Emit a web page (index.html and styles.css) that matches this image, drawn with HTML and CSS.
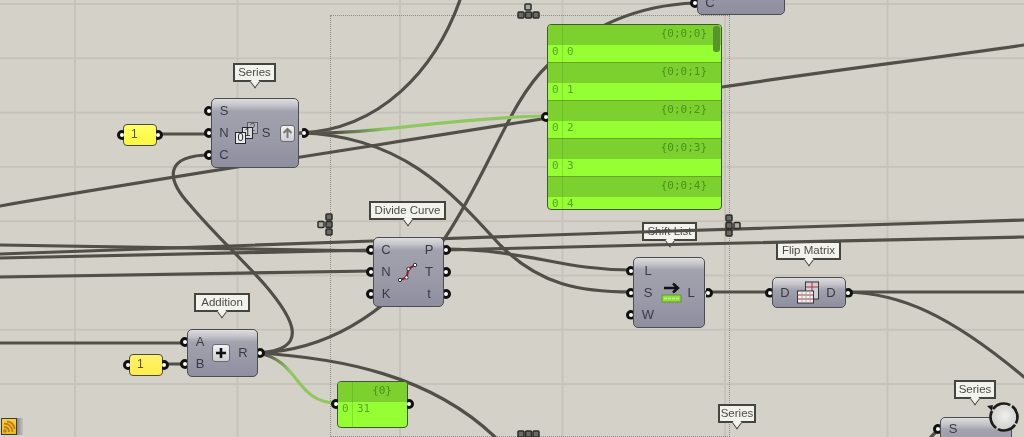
FILE: index.html
```html
<!DOCTYPE html>
<html lang="en">
<head>
    <meta charset="UTF-8">
    <title>Grasshopper canvas</title>
    <link rel="stylesheet" href="styles.css">
</head>
<body>
    <div class="canvas">
        <div class="group"></div>

        <!-- tooltips sit under the wires -->
        <div class="tip tip-series">Series</div>
        <div class="tip tip-divide">Divide Curve</div>
        <div class="tip tip-shift">Shift List</div>
        <div class="tip tip-flip">Flip Matrix</div>
        <div class="tip tip-add">Addition</div>
        <div class="tip tip-series2">Series</div>
        <div class="tip tip-series3">Series</div>

        <svg class="wires" width="1024" height="437" viewBox="0 0 1024 437">
            <defs>
                <linearGradient id="green1" gradientUnits="userSpaceOnUse" x1="300" y1="0" x2="546" y2="0">
                    <stop offset="0.15" stop-color="#56554c"/>
                    <stop offset="0.35" stop-color="#8fc760"/>
                </linearGradient>
                <linearGradient id="green2" gradientUnits="userSpaceOnUse" x1="258" y1="0" x2="337" y2="0">
                    <stop offset="0.1" stop-color="#56554c"/>
                    <stop offset="0.4" stop-color="#8fc760"/>
                </linearGradient>
            </defs>
            <!-- long runs -->
            <path d="M0 206 C180 175 360 148 548 118"/>
            <path d="M722 87 C820 72 920 60 1024 45"/>
            <path d="M0 245 C130 248 260 250 373 251"/>
            <path d="M0 254 C130 250 260 246 373 241 L640 232 L1024 220"/>
            <path d="M0 258 C130 255 260 252 373 250 L445 250 L650 245 L1024 237"/>
            <path d="M0 277 C130 274 260 272 373 271"/>
            <path d="M0 343 L187 343"/>
            <!-- series -->
            <path d="M156 134 L211 134"/>
            <path d="M300 133 C380 130 435 70 460 0"/>
            <path d="M300 133 C400 135 450 190 500 245 C540 285 580 292 632 292"/>
            <path d="M211 155 C165 155 165 178 190 205 C215 235 245 262 265 285 C295 320 310 350 258 353"/>
            <!-- addition out -->
            <path d="M258 353 C340 350 400 300 445 238 C490 170 510 100 548 65 C590 25 640 5 695 3"/>
            <path d="M258 353 C340 358 430 375 495 437"/>
            <path d="M162 364 L187 364"/>
            <!-- divide, shift, flip -->
            <path d="M445 249 C530 250 560 270 632 270"/>
            <path d="M705 292 L772 292"/>
            <path d="M846 292 L1024 292"/>
            <path d="M846 292 C900 293 950 315 1024 377"/>
            <path d="M931 437 L938 430"/>
            <path class="hot" stroke="url(#green1)" d="M300 133 C380 135 440 118 546 116"/>
            <path class="hot" stroke="url(#green2)" d="M258 353 C300 360 295 403 337 403"/>
        </svg>

        <!-- widgets of the group -->
        <svg class="gadget gd-top" width="24" height="16" viewBox="0 0 24 16"><rect x="8" y="1" width="6" height="6" class="pale"/><rect x="1" y="9" width="6" height="6"/><rect x="8.500" y="9" width="6" height="6"/><rect x="16" y="9" width="6" height="6"/></svg>
        <svg class="gadget gd-left" width="17" height="24" viewBox="0 0 17 24"><rect x="9" y="1" width="6" height="6"/><rect x="1" y="8.500" width="6" height="6" class="pale"/><rect x="9" y="8.500" width="6" height="6"/><rect x="9" y="16" width="6" height="6"/></svg>
        <svg class="gadget gd-right" width="17" height="24" viewBox="0 0 17 24"><rect x="1" y="1" width="6" height="6"/><rect x="1" y="8.500" width="6" height="6"/><rect x="9" y="8.500" width="6" height="6" class="pale"/><rect x="1" y="16" width="6" height="6"/></svg>
        <svg class="gadget gd-bottom" width="24" height="8" viewBox="0 0 24 8"><rect x="1" y="1" width="6" height="6"/><rect x="8.500" y="1" width="6" height="6"/><rect x="16" y="1" width="6" height="6"/></svg>

        <!-- sliders -->
        <div class="slider sl-1"><span class="port port-l"></span>1<span class="port port-r"></span></div>
        <div class="slider sl-2"><span class="port port-l"></span>1<span class="port port-r"></span></div>

        <!-- series -->
        <div class="node n-series">
            <div class="ins"><span class="pin">S</span><span class="pin">N</span><span class="pin">C</span></div>
            <div class="chips">
                <span class="chip chip-2">2</span>
                <span class="chip chip-1">1</span>
                <span class="chip chip-0">0</span>
            </div>
            <div class="outs outs-btn">
                <span class="pin pin-out">S</span>
                <span class="btn btn-up">
                    <svg width="11" height="12" viewBox="0 0 11 12"><path d="M5.500 11 V3 M1.500 6 L5.500 2 L9.500 6" fill="none" stroke="#777" stroke-width="2"/></svg>
                </span>
            </div>
        </div>

        <!-- top node, cut by the window -->
        <div class="node n-top">
            <div class="ins ins-end"><span class="pin">C</span></div>
        </div>

        <!-- divide curve -->
        <div class="node n-divide">
            <div class="ins"><span class="pin">C</span><span class="pin">N</span><span class="pin">K</span></div>
            <svg class="glyph" width="22" height="22" viewBox="0 0 22 22">
                <path d="M3 19 L9.500 16.500 L11.500 8 L18 4" fill="none" stroke="#8c1c24" stroke-width="2"/>
                <g fill="#fff" stroke="#333"><circle cx="3" cy="19" r="1.700"/><circle cx="9.500" cy="16.500" r="1.700"/><circle cx="11.500" cy="8" r="1.700"/><circle cx="18" cy="4" r="1.700"/></g>
            </svg>
            <div class="outs"><span class="pin pin-out">P</span><span class="pin pin-out">T</span><span class="pin pin-out">t</span></div>
        </div>

        <!-- shift list -->
        <div class="node n-shift">
            <div class="ins"><span class="pin">L</span><span class="pin">S</span><span class="pin">W</span></div>
            <svg class="glyph" width="22" height="22" viewBox="0 0 22 22">
                <path d="M3 6 H17 M12 1.500 L17 6 L12 10.500" fill="none" stroke="#111" stroke-width="2.400"/>
                <rect x="1" y="13" width="19" height="7" fill="#8ee03c" stroke="#5e9a2a"/>
                <path d="M3 16.500 H18" stroke="#c4ee8c" stroke-width="1.500" stroke-dasharray="3 1"/>
            </svg>
            <div class="outs"><span class="pin pin-out">L</span></div>
        </div>

        <!-- flip matrix -->
        <div class="node n-flip">
            <div class="ins"><span class="pin">D</span></div>
            <svg class="glyph" width="24" height="24" viewBox="0 0 24 24">
                <rect x="9.500" y="1" width="13" height="17" fill="#cfcfd4" stroke="#333"/>
                <path d="M16 1 V18 M9.500 6 H22.500" stroke="#b03038"/>
                <rect x="1.500" y="10" width="16" height="12" fill="#f2f2f2" stroke="#333"/>
                <path d="M1.500 14 H17.500 M1.500 18 H17.500" stroke="#b03038"/>
                <path d="M6 10 V22 M10 10 V22 M14 10 V22" stroke="#aaa"/>
            </svg>
            <div class="outs"><span class="pin pin-out">D</span></div>
        </div>

        <!-- addition -->
        <div class="node n-add">
            <div class="ins"><span class="pin">A</span><span class="pin">B</span></div>
            <span class="btn btn-plus">
                <svg width="12" height="12" viewBox="0 0 12 12"><path d="M6 1 V11 M1 6 H11" stroke="#111" stroke-width="2.600"/></svg>
            </span>
            <div class="outs"><span class="pin pin-out">R</span></div>
        </div>

        <!-- lower right series -->
        <div class="node n-series3">
            <div class="ins ins-start"><span class="pin">S</span></div>
        </div>
        <svg class="knob" width="34" height="34" viewBox="0 0 34 34">
            <defs>
                <radialGradient id="knobfill" cx="50%" cy="45%" r="55%">
                    <stop offset="0" stop-color="#f0f0ee"/>
                    <stop offset="1" stop-color="#cdcdca"/>
                </radialGradient>
            </defs>
            <circle cx="18" cy="17" r="13.500" fill="url(#knobfill)" stroke="#1c1c1a" stroke-width="2.600" stroke-dasharray="19 2.200" transform="rotate(35 18 17)"/>
            <path d="M1 6 L7 5 L6 11 Z" fill="#1c1c1a"/>
        </svg>

        <!-- big panel -->
        <div class="panel panel-big">
            <span class="port port-panel"></span>
            <div class="rows">
                <div class="head">{0;0;0}</div><div class="line"><b>0</b>0</div>
                <div class="head">{0;0;1}</div><div class="line"><b>0</b>1</div>
                <div class="head">{0;0;2}</div><div class="line"><b>0</b>2</div>
                <div class="head">{0;0;3}</div><div class="line"><b>0</b>3</div>
                <div class="head">{0;0;4}</div><div class="line"><b>0</b>4</div>
            </div>
            <span class="scroll"></span>
        </div>

        <!-- small panel -->
        <div class="panel panel-small">
            <span class="port port-panel"></span>
            <span class="port port-panel2"></span>
            <div class="rows">
                <div class="head">{0}</div><div class="line line-last"><b>0</b>31</div>
            </div>
        </div>

        <!-- status icon -->
        <div class="status">
            <span class="status-icon">
                <svg width="14" height="14" viewBox="0 0 14 14"><g fill="none" stroke="#c27c18" stroke-width="1.800"><path d="M2 7 C5 7 7 9 7 12"/><path d="M2 3.500 C7 3.500 10.500 7 10.500 12"/><path d="M5 1.500 C9 1.500 12.500 5 12.500 9"/></g><circle cx="3" cy="11" r="1.800" fill="#c27c18"/></svg>
            </span>
            <span class="status-bar"></span>
        </div>
    </div>
</body>
</html>
```

FILE: styles.css
```css
html, body {
    height: 100%;
    margin: 0;
    padding: 0;
}
body {
    overflow: hidden;
    font-family: "Liberation Sans", Arial, sans-serif;
}

/* canvas and grid */
.canvas {
    position: relative;
    width: 1024px;
    height: 437px;
    overflow: hidden;
    background-color: #d4d1c9;
    background-image:
        linear-gradient(90deg, #c6c4ba 2px, transparent 2px),
        linear-gradient(#c6c4ba 2px, transparent 2px);
    background-size: 162.500px 100%, 100% 54.300px;
    background-position: 74px 0, 0 3px;
    filter: blur(0.5px);
}
.group {
    position: absolute;
    left: 330px;
    top: 15px;
    width: 398px;
    height: 420px;
    border: 1px dotted #8d8c84;
}
.wires {
    position: absolute;
    left: 0;
    top: 0;
}
.wires path {
    fill: none;
    stroke: #514f47;
    stroke-width: 3.200;
    stroke-linecap: round;
}
.wires path.hot {
    stroke: url(#green1);
}
.wires path.hot:last-child {
    stroke: url(#green2);
}

/* tooltips */
.tip {
    position: absolute;
    box-sizing: border-box;
    height: 19px;
    border: 2px solid #45453f;
    background: #f3f3ee;
    color: #4a4a48;
    font-size: 11.500px;
    line-height: 15px;
    text-align: center;
    white-space: nowrap;
}
.tip::after {
    content: "";
    position: absolute;
    left: 50%;
    bottom: -6px;
    width: 7px;
    height: 7px;
    margin-left: -4px;
    border-right: 1.500px solid #45453f;
    border-bottom: 1.500px solid #45453f;
    background: #f3f3ee;
    transform: rotate(45deg) skew(8deg, 8deg);
}
.tip-series { left: 233px; top: 63px; width: 43px; }
.tip-divide { left: 369px; top: 201px; width: 77px; }
.tip-shift { left: 642px; top: 222px; width: 55px; }
.tip-flip { left: 776px; top: 241px; width: 65px; }
.tip-add { left: 194px; top: 293px; width: 56px; }
.tip-series2 { left: 718px; top: 404px; width: 38px; }
.tip-series3 { left: 954px; top: 380px; width: 42px; }

/* group widgets */
.gadget {
    position: absolute;
}
.gadget rect {
    fill: #6a6a62;
    stroke: #2b2b28;
    stroke-width: 1.500;
    rx: 1px;
}
.gadget rect.pale {
    fill: #aaa9a1;
}
.gd-top { left: 517px; top: 3px; }
.gd-left { left: 317px; top: 213px; }
.gd-right { left: 725px; top: 214px; }
.gd-bottom { left: 517px; top: 430px; }

/* ports */
.port, .pin::before, .pin-out::after {
    box-sizing: border-box;
    width: 10px;
    height: 10px;
    border: 3px solid #111110;
    border-radius: 50%;
    background: #fff;
}
.port {
    position: absolute;
    top: 50%;
    margin-top: -5px;
}
.port-l {
    left: -7px;
    clip-path: inset(0 3px 0 0);
}
.port-r {
    right: -7px;
    clip-path: inset(0 0 0 3px);
}

/* number sliders */
.slider {
    position: absolute;
    box-sizing: border-box;
    width: 34px;
    height: 22px;
    padding-left: 7px;
    border: 1.500px solid #4a4a3c;
    border-radius: 4px;
    color: #55552a;
    font-size: 12px;
    line-height: 18px;
}
.sl-1 {
    left: 123px;
    top: 124px;
    background: linear-gradient(#ffff66, #fdf83e);
}
.sl-2 {
    left: 129px;
    top: 354px;
    background: linear-gradient(#fff268, #ffec4e);
}

/* components */
.node {
    position: absolute;
    box-sizing: border-box;
    display: flex;
    align-items: center;
    border: 1px solid #4c4c52;
    border-radius: 5px;
    background: linear-gradient(#dededf 0, #c0c0c8 7px, #a2a2ae 12px, #9a9aa8 60%, #8e8e9f 100%);
    color: #3a3a46;
    font-size: 13px;
}
.ins {
    display: flex;
    flex-direction: column;
    justify-content: center;
    flex-shrink: 0;
    padding-left: 4px;
}
.ins-end {
    align-self: stretch;
    justify-content: flex-end;
}
.ins-start {
    align-self: stretch;
    justify-content: flex-start;
}
.outs {
    display: flex;
    flex-direction: column;
    flex-shrink: 0;
    margin-left: auto;
    padding-right: 6px;
}
.pin {
    position: relative;
    width: 16px;
    height: 22px;
    line-height: 21px;
    text-align: center;
}
.pin::before {
    content: "";
    position: absolute;
    left: -12px;
    top: 6px;
    clip-path: inset(0 3px 0 0);
}
.pin-out::before {
    display: none;
}
.pin-out::after {
    content: "";
    position: absolute;
    right: -14px;
    top: 6px;
    clip-path: inset(0 0 0 3px);
}
.outs-btn {
    flex-direction: row;
    align-items: center;
    gap: 6px;
    padding-right: 3px;
}
.outs-btn .pin-out::after {
    right: -35px;
}
.glyph {
    flex-shrink: 0;
}
.btn {
    display: flex;
    align-items: center;
    justify-content: center;
    box-sizing: border-box;
    border: 1px solid #6a6a70;
    border-radius: 3px;
    background: linear-gradient(#f2f2f2, #cfcfd3);
}
.btn-up {
    width: 15px;
    height: 17px;
}
.btn-plus {
    flex-shrink: 0;
    width: 18px;
    height: 18px;
    margin-left: 4px;
}

.n-series { left: 211px; top: 98px; width: 88px; height: 70px; }
.n-top { left: 697px; top: -50px; width: 88px; height: 65px; }
.n-divide { left: 373px; top: 237px; width: 71px; height: 70px; }
.n-shift { left: 633px; top: 257px; width: 72px; height: 71px; }
.n-flip { left: 772px; top: 277px; width: 74px; height: 31px; }
.n-add { left: 187px; top: 329px; width: 71px; height: 48px; }
.n-series3 { left: 940px; top: 417px; width: 72px; height: 60px; }

.n-divide .glyph { margin-left: 3px; }
.n-shift .ins { padding-left: 6px; }
.n-shift .pin::before { left: -14px; }
.n-shift .glyph { margin-left: 5px; }
.n-flip .glyph { margin-left: 3px; }

/* the 0 1 2 pictogram of Series */
.chips {
    position: relative;
    flex-shrink: 0;
    width: 23px;
    height: 22px;
    margin-left: 3px;
}
.chip {
    position: absolute;
    box-sizing: border-box;
    width: 11px;
    height: 12px;
    border: 1.500px solid #26262b;
    background: #ececf0;
    color: #222;
    font-size: 11px;
    line-height: 9px;
    text-align: center;
}
.chip-0 { left: 0; top: 10px; }
.chip-1 { left: 7px; top: 5px; background: #dcdce0; }
.chip-2 { left: 12px; top: 0; background: #b4b4bc; border-color: #5a5a62; color: #555; }

/* panels */
.panel {
    position: absolute;
    box-sizing: border-box;
    border: 1.500px solid #3f5a2a;
    border-radius: 4px;
    background: #96ff34;
    font-family: "DejaVu Sans Mono", "Liberation Mono", monospace;
    font-size: 11px;
}
.panel::after {
    content: "";
    position: absolute;
    left: 14px;
    top: 0;
    bottom: 0;
    width: 1px;
    background: rgba(60, 120, 20, 0.22);
}
.rows {
    height: 100%;
    overflow: hidden;
    border-radius: 3px;
}
.head {
    box-sizing: border-box;
    height: 20px;
    padding-right: 14px;
    background: #7cd12e;
    color: #4d8f1e;
    line-height: 17px;
    text-align: right;
    white-space: nowrap;
}
.line {
    box-sizing: border-box;
    height: 18px;
    border-bottom: 1.500px solid #66a828;
    color: #58a626;
    line-height: 13px;
    white-space: nowrap;
}
.line b {
    display: inline-block;
    width: 19px;
    padding-left: 4px;
    box-sizing: border-box;
    font-weight: normal;
}
.line-last {
    border-bottom: 0;
    height: 26px;
}
.panel-big { left: 547px; top: 24px; width: 175px; height: 186px; }
.panel-small { left: 337px; top: 381px; width: 71px; height: 47px; }
.panel-small .head { padding-right: 15px; }
.port-panel {
    left: -7px;
    top: 92px;
    clip-path: inset(0 3px 0 0);
}
.panel-small .port-panel {
    top: 22px;
}
.port-panel2 {
    right: -7px;
    top: 22px;
    clip-path: inset(0 0 0 3px);
}
.scroll {
    position: absolute;
    left: 165px;
    top: 1px;
    width: 7px;
    height: 26px;
    border-radius: 3px;
    background: #54962a;
}

/* the little round navigator */
.knob {
    position: absolute;
    left: 986px;
    top: 400px;
}

/* bottom left status */
.status {
    position: absolute;
    left: 1px;
    top: 418px;
    display: flex;
    height: 17px;
}
.status-icon {
    display: flex;
    align-items: center;
    justify-content: center;
    width: 16px;
    border: 1px solid #3c3c34;
    box-sizing: border-box;
    background: linear-gradient(#f5d040, #ecb826);
}
.status-bar {
    width: 6px;
    background: linear-gradient(90deg, #8c8c8c, #c4c4c4);
}
```
